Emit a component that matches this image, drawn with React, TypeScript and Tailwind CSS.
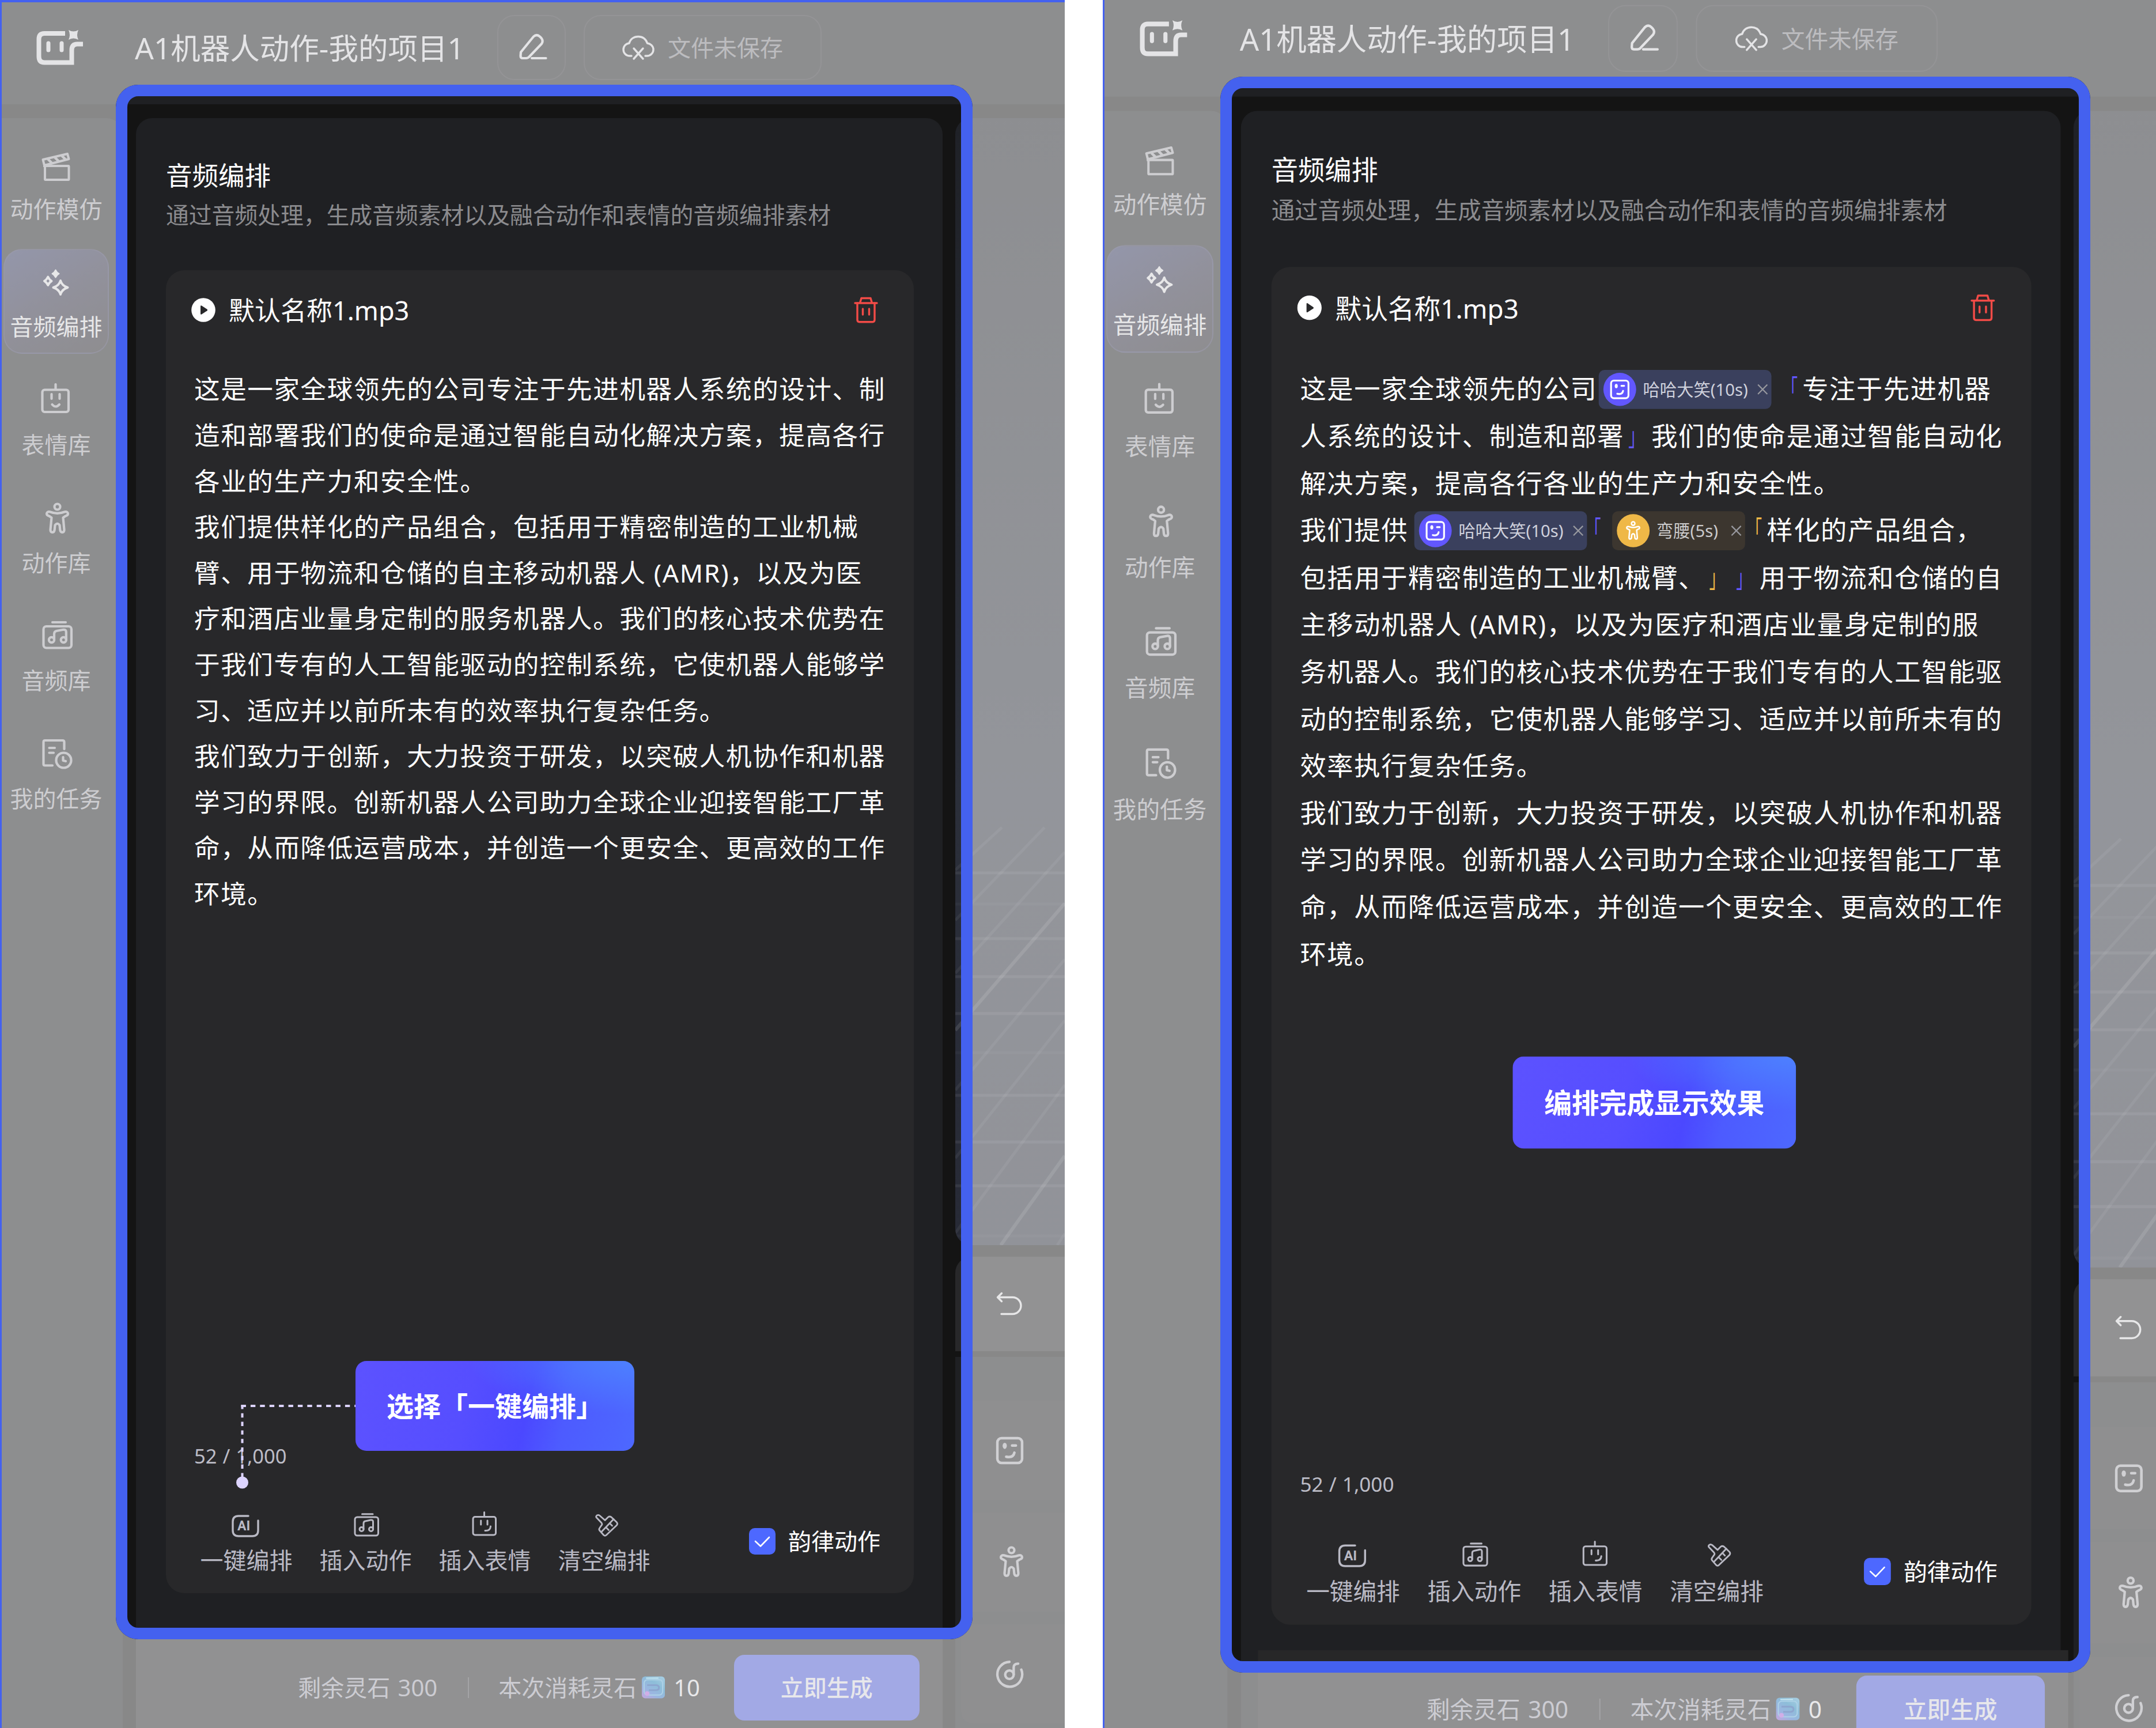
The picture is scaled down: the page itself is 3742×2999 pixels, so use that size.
import type { ReactNode } from "react";
import clsx from "clsx";

type IconProps = { className?: string };

const FONT = "font-['Noto_Sans','Noto_Sans_CJK_SC',sans-serif]";

/* ---------- icons ---------- */

function Logo({ className }: IconProps) {
  return (
    <svg viewBox="0 0 84 64" className={className} fill="none" stroke="currentColor" strokeWidth="8">
      <path d="M51 7H15Q5.500 7 5.500 17V47Q5.500 57.500 15 57.500H62.500V36Q62.500 25.500 72 25.500H82" />
      <path d="M22 24V36M45 24V36" strokeWidth="7" strokeLinecap="round" />
      <path d="M57 1Q65.500 6 74 1Q70 9.500 74 18Q65.500 13 57 18Q61 9.500 57 1Z" fill="currentColor" stroke="none" />
    </svg>
  );
}

function PencilIcon({ className }: IconProps) {
  return (
    <svg viewBox="0 0 60 60" className={className} fill="none" stroke="currentColor" strokeWidth="4.200" strokeLinecap="round" strokeLinejoin="round">
      <path d="M11 37.500L33 10.500Q38.500 5.500 44 10.500L46.500 13Q50.500 18 47 23L26 45Q23.500 48 20 48H14Q10.500 48 10.500 44Z" />
      <path d="M30 48H54.500" />
    </svg>
  );
}

function CloudOffIcon({ className }: IconProps) {
  return (
    <svg viewBox="0 0 56 44" className={className} fill="none" stroke="currentColor" strokeWidth="3.400" strokeLinecap="round">
      <path d="M16 36H13C6.500 36 2 31 2 25C2 19 6.500 14.500 12 14C14 7 20 2.500 27.700 2.500C35.500 2.500 41 7 43.500 14C49 14.500 54 19 54 25C54 31 49 36 43 36H40" />
      <path d="M20 23L36 41M36 23L20 41" />
    </svg>
  );
}

function ClapperIcon({ className }: IconProps) {
  return (
    <svg viewBox="0 0 64 64" className={className} fill="none" stroke="currentColor" strokeWidth="4" strokeLinejoin="round">
      <rect x="12" y="34" width="41.500" height="24" rx="1" />
      <path d="M8.500 23L51 13L53.500 22L11 33Z" />
      <path d="M17 22L24 29M29 19L36 26M41 16L48 23" strokeWidth="4.500" />
      <path d="M11 30V36" />
    </svg>
  );
}

function SparklesIcon({ className }: IconProps) {
  return (
    <svg viewBox="0 0 64 64" className={className} fill="none" stroke="currentColor" strokeWidth="4" strokeLinejoin="round">
      <path d="M30.500 10.500Q32.500 15 36.500 17Q32.500 19 30.500 23.500Q28.500 19 24.500 17Q28.500 15 30.500 10.500Z" fill="currentColor" strokeWidth="2" />
      <path d="M17.300 22.500Q19.500 27.500 23.500 29.700Q19.500 32 17.300 37Q15 32 11 29.700Q15 27.500 17.300 22.500Z" />
      <path d="M39 29Q41.500 38 51.500 41Q41.500 44 39 53Q36.500 44 26.500 41Q36.500 38 39 29Z" />
    </svg>
  );
}

function RobotIcon({ className }: IconProps) {
  return (
    <svg viewBox="0 0 64 64" className={className} fill="none" stroke="currentColor" strokeWidth="4.200" strokeLinecap="round">
      <rect x="7.500" y="13.500" width="45.500" height="38.500" rx="4" />
      <path d="M30.500 4V13M23.500 21V29M37.500 21V29" />
      <path d="M24.500 39Q30.500 46 37 39" />
    </svg>
  );
}

function PersonIcon({ className }: IconProps) {
  return (
    <svg viewBox="0 0 64 64" className={className} fill="none" stroke="currentColor" strokeWidth="4.200" strokeLinejoin="round">
      <circle cx="33.500" cy="11.500" r="5" />
      <path d="M20.500 20.300Q33.500 25.500 46.500 20.300Q51.500 19.500 52 23.500Q52 26.500 47 28L43.500 30.500L45.500 51.500Q45.500 55.800 42 55.800Q38.800 55.800 38.300 51.500L37.500 43.500Q33.500 38 29.500 43.500L28.700 51.500Q28.200 55.800 25 55.800Q21.500 55.800 21.500 51.500L23.500 30.500L20 28Q15 26.500 15 23.500Q15.500 19.500 20.500 20.300Z" />
    </svg>
  );
}

function MusicBoxIcon({ className }: IconProps) {
  return (
    <svg viewBox="0 0 64 64" className={className} fill="none" stroke="currentColor" strokeWidth="4.200" strokeLinecap="round" strokeLinejoin="round">
      <rect x="9.500" y="15" width="48.500" height="37.500" rx="5" />
      <path d="M25 8H48" />
      <circle cx="23.500" cy="38.500" r="4.600" />
      <circle cx="44.300" cy="38.500" r="4.600" />
      <path d="M28 38V28Q28 24 32 23L44 20.800Q48.800 20.300 48.800 25V38" />
    </svg>
  );
}

function TaskIcon({ className }: IconProps) {
  return (
    <svg viewBox="0 0 64 64" className={className} fill="none" stroke="currentColor" strokeWidth="4.200" strokeLinecap="round" strokeLinejoin="round">
      <path d="M25 51.500H12Q9.500 51.500 9.500 49V11Q9.500 8 12 8H42.500Q45.500 8 45.500 11V23" />
      <path d="M19.500 21H29M19.500 29.500H27" />
      <circle cx="44.500" cy="42.500" r="13" />
      <path d="M43.500 37V43L48 44" />
    </svg>
  );
}

function AiIcon({ className }: IconProps) {
  return (
    <svg viewBox="0 0 60 60" className={className} fill="none" stroke="currentColor" strokeWidth="3.400" strokeLinecap="round">
      <path d="M33 14H16Q6 14 6 24V39Q6 49 16 49H40Q50 49 50 39V22" />
      <text x="14" y="39" fontSize="23" fontWeight="700" fill="currentColor" stroke="none" fontFamily="Roboto">
        AI
      </text>
    </svg>
  );
}

function InsertMotionIcon({ className }: IconProps) {
  return (
    <svg viewBox="0 0 60 60" className={className} fill="none" stroke="currentColor" strokeWidth="3" strokeLinecap="round" strokeLinejoin="round">
      <rect x="11" y="16" width="40.500" height="32" rx="4" />
      <path d="M23.500 10.800H42" />
      <circle cx="22.500" cy="37" r="3.500" />
      <circle cx="39" cy="37" r="3.500" />
      <path d="M26 37V27Q26 23.500 29 23L38.500 21Q42.500 20.500 42.500 24V37" />
    </svg>
  );
}

function InsertFaceIcon({ className }: IconProps) {
  return (
    <svg viewBox="0 0 60 60" className={className} fill="none" stroke="currentColor" strokeWidth="3" strokeLinecap="round">
      <rect x="9" y="15.500" width="39.500" height="31.500" rx="3.500" />
      <path d="M28.500 7.500V15M22.700 22V29M34 22V29M30 39.500Q39 40 39.500 32" />
    </svg>
  );
}

function BrushIcon({ className }: IconProps) {
  return (
    <svg viewBox="0 0 60 60" className={className} fill="none" stroke="currentColor" strokeWidth="2.800" strokeLinecap="round" strokeLinejoin="round">
      <path d="M17 13Q19.500 11.500 22 13.500L31 21.500L36.500 16Q39 14 42 16L51.500 25Q53.500 27.500 51.500 30L33 47.500Q31 49 29 47.500L21.500 39Q20 37 22 34.500L25.500 29.500Q26.500 28 25 26L16 16.500Q15 14.500 17 13Z" />
      <path d="M46 19.500L24.500 42M33 34L37.500 38.500M40 27.500L43.500 31" />
    </svg>
  );
}

function PlayIcon({ className }: IconProps) {
  return (
    <svg viewBox="0 0 42 42" className={className}>
      <circle cx="21" cy="21" r="20.800" fill="#fff" />
      <path d="M16 14.500V27.500Q16 29.500 18 28.500L27.500 22.200Q29 21 27.500 19.800L18 13.500Q16 12.500 16 14.500Z" fill="#28282a" />
    </svg>
  );
}

function TrashIcon({ className }: IconProps) {
  return (
    <svg viewBox="0 0 42 46" className={className} fill="none" stroke="currentColor" strokeWidth="3.400" strokeLinecap="round" strokeLinejoin="round">
      <path d="M2 11H40M10.500 11L13 2.500H29L31.500 11" />
      <path d="M6 11V40Q6 43.700 9.500 43.700H32.500Q36 43.700 36 40V11" />
      <path d="M15.500 21V31M26.500 21V31" />
    </svg>
  );
}

function UndoIcon({ className }: IconProps) {
  return (
    <svg viewBox="0 0 48 44" className={className} fill="none" stroke="currentColor" strokeWidth="3.400" strokeLinecap="round" strokeLinejoin="round">
      <path d="M10.500 3.500L3.500 10.500L10.500 17.500M4 10.500H29.500A14.500 14.500 0 0 1 29.500 39.500H10" />
    </svg>
  );
}

function WinkIcon({ className }: IconProps) {
  return (
    <svg viewBox="0 0 48 48" className={className} fill="none" stroke="currentColor" strokeWidth="4.400" strokeLinecap="round">
      <rect x="3" y="3" width="42" height="42" rx="7" />
      <ellipse cx="15.500" cy="16" rx="3.600" ry="5.200" fill="currentColor" stroke="none" />
      <path d="M28 15.500H34.500M18 34.500Q30 37 32 27.500" />
    </svg>
  );
}

function DiscIcon({ className }: IconProps) {
  return (
    <svg viewBox="0 0 50 50" className={className} fill="none" stroke="currentColor" strokeWidth="4.400" strokeLinecap="round">
      <path d="M24.500 3.300A22 22 0 1 0 45.500 17" />
      <circle cx="24.500" cy="26" r="7.500" />
      <path d="M32 26V13Q32 6.500 40 6.500" />
    </svg>
  );
}

function Gem({ className }: IconProps) {
  return (
    <svg viewBox="0 0 42 40" className={className} fill="none">
      <defs>
        <linearGradient id="gem" x1="0" y1="1" x2="0.800" y2="0">
          <stop offset="0" stopColor="#8f4fc0" />
          <stop offset="0.350" stopColor="#3a6fc4" />
          <stop offset="0.700" stopColor="#1f7fb4" />
          <stop offset="1" stopColor="#4a9ac4" />
        </linearGradient>
      </defs>
      <rect x="0.500" y="0.500" width="41" height="39" rx="6" fill="url(#gem)" />
      <rect x="4.500" y="6.500" width="33" height="27" rx="6" stroke="#5fa6d0" strokeWidth="2" />
      <path d="M10 16H25Q31 16 31 20.500Q31 25 25 25H13" stroke="#1f4fa0" strokeWidth="3" />
      <path d="M8 3.500H30" stroke="#8fcfe6" strokeWidth="2" />
      <circle cx="10" cy="31" r="4" fill="#a45fd0" />
    </svg>
  );
}

/* ---------- header and sidebar ---------- */

function Header() {
  return (
    <header className="flex h-[181px] items-start bg-[#1f2023] pt-[26px] text-[#cacacd]">
      <div className="flex h-[113px] items-center">
        <Logo className="ml-[62px] h-[64px] w-[84px]" />
        <h1 className="ml-[88px] w-[629px] text-[51.500px] leading-[60px] whitespace-nowrap">A1机器人动作-我的项目1</h1>
      </div>
      <div className="flex h-[113px] w-[119px] items-center justify-center rounded-[30px] border-2 border-[#2d2d31]">
        <PencilIcon className="size-[60px]" />
      </div>
      <div className="ml-[31px] flex h-[113px] w-[413px] items-center justify-center gap-[23px] rounded-[30px] border-2 border-[#2d2d31]">
        <CloudOffIcon className="h-[44px] w-[56px]" />
        <span className="text-[40px] leading-[50px] text-[#7c7c81]">文件未保存</span>
      </div>
    </header>
  );
}

const navItems = [
  { label: "动作模仿", icon: ClapperIcon },
  { label: "音频编排", icon: SparklesIcon, active: true },
  { label: "表情库", icon: RobotIcon },
  { label: "动作库", icon: PersonIcon },
  { label: "音频库", icon: MusicBoxIcon },
  { label: "我的任务", icon: TaskIcon },
];

function Sidebar() {
  return (
    <nav className="flex w-[213px] shrink-0 flex-col gap-[22.700px] rounded-tr-[28px] bg-[#1f2023] pt-[23px] pl-[6px]">
      {navItems.map(({ label, icon: Icon, active }) => (
        <div
          key={label}
          className={clsx(
            "flex h-[182px] w-[183px] flex-col items-center rounded-[32px] border-2 pt-[24px]",
            active
              ? "border-[#3a3b58]/60 bg-linear-150 from-[#2c3158] via-[#27263a] to-[#211f24] text-[#cfcfd2]"
              : "border-transparent text-[#9d9da2]",
          )}
        >
          <Icon className="size-[64px] shrink-0" />
          <span className="mt-[20px] text-[40px] leading-[50px] whitespace-nowrap">{label}</span>
        </div>
      ))}
    </nav>
  );
}

/* ---------- script text ---------- */

function Line({ children }: { children: ReactNode }) {
  return <div className="flex h-[79.600px] items-center whitespace-pre">{children}</div>;
}

function Tag({ kind, label }: { kind: "face" | "motion"; label: string }) {
  const face = kind === "face";
  return (
    <span
      className={clsx(
        "flex h-[66px] shrink-0 items-center rounded-[10px] pl-[8px] text-[28.800px] leading-[40px] tracking-normal",
        face ? "w-[295px] bg-[#3a405d] text-[#cfd1dc]" : "w-[227px] bg-[#3c362f] text-[#cbcacb]",
      )}
    >
      <span
        className={clsx(
          "flex size-[56px] items-center justify-center rounded-full text-white",
          face ? "bg-[#6257ff]" : "bg-[#efb847]",
        )}
      >
        {face ? <WinkIcon className="size-[34px]" /> : <PersonIcon className="mr-[2px] size-[38px]" />}
      </span>
      <span className="ml-[12px]">{label}</span>
      <svg viewBox="0 0 18 18" className="mr-[6px] ml-auto size-[18px]" stroke="#98999f" strokeWidth="2.200">
        <path d="M1 1L17 17M17 1L1 17" />
      </svg>
    </span>
  );
}

// Corner brackets mark the stretch of text a tag applies to; they are narrower than the glyph's own arm.
function Open({ className }: { className: string }) {
  return <span className={clsx("origin-[28px_50%] scale-x-60", className)}>「</span>;
}

function Close({ className }: { className: string }) {
  return <span className={clsx("origin-[17px_50%] scale-x-60", className)}>」</span>;
}

const rawLines = [
  "这是一家全球领先的公司专注于先进机器人系统的设计、制",
  "造和部署我们的使命是通过智能自动化解决方案，提高各行",
  "各业的生产力和安全性。",
  "我们提供样化的产品组合，包括用于精密制造的工业机械",
  "臂、用于物流和仓储的自主移动机器人 (AMR)，以及为医",
  "疗和酒店业量身定制的服务机器人。我们的核心技术优势在",
  "于我们专有的人工智能驱动的控制系统，它使机器人能够学",
  "习、适应并以前所未有的效率执行复杂任务。",
  "我们致力于创新，大力投资于研发，以突破人机协作和机器",
  "学习的界限。创新机器人公司助力全球企业迎接智能工厂革",
  "命，从而降低运营成本，并创造一个更安全、更高效的工作",
  "环境。",
];

function RawScript() {
  return (
    <>
      {rawLines.map((text) => (
        <Line key={text}>{text}</Line>
      ))}
    </>
  );
}

const arrangedRest = [
  "主移动机器人 (AMR)，以及为医疗和酒店业量身定制的服",
  "务机器人。我们的核心技术优势在于我们专有的人工智能驱",
  "动的控制系统，它使机器人能够学习、适应并以前所未有的",
  "效率执行复杂任务。",
  ...rawLines.slice(8),
];

function ArrangedScript() {
  return (
    <>
      <Line>
        <span>这是一家全球领先的公司</span>
        <span className="ml-[2px] flex">
          <Tag kind="face" label="哈哈大笑(10s)" />
        </span>
        <Open className="ml-[7px] text-[#6257ff]" />
        <span>专注于先进机器</span>
      </Line>
      <Line>
        <span>人系统的设计、制造和部署</span>
        <Close className="text-[#6257ff]" />
        <span>我们的使命是通过智能自动化</span>
      </Line>
      <Line>解决方案，提高各行各业的生产力和安全性。</Line>
      <Line>
        <span>我们提供</span>
        <span className="ml-[10px] flex">
          <Tag kind="face" label="哈哈大笑(10s)" />
        </span>
        <Open className="-ml-[14px] text-[#6257ff]" />
        <span className="ml-[11px] flex">
          <Tag kind="motion" label="弯腰(5s)" />
        </span>
        <Open className="-ml-[9px] text-[#efb847]" />
        <span>样化的产品组合，</span>
      </Line>
      <Line>
        <span>包括用于精密制造的工业机械臂、</span>
        <Close className="text-[#efb847]" />
        <Close className="text-[#6257ff]" />
        <span>用于物流和仓储的自</span>
      </Line>
      {arrangedRest.map((text) => (
        <Line key={text}>{text}</Line>
      ))}
    </>
  );
}

/* ---------- main panel ---------- */

const tools = [
  { label: "一键编排", icon: AiIcon },
  { label: "插入动作", icon: InsertMotionIcon },
  { label: "插入表情", icon: InsertFaceIcon },
  { label: "清空编排", icon: BrushIcon },
];

function Toolbar() {
  return (
    <div className="flex items-center pr-[58px] pl-[10.500px]">
      <div className="flex gap-[47px]">
        {tools.map(({ label, icon: Icon }) => (
          <div key={label} className="flex w-[160px] flex-col items-center text-[#b9b9c4]">
            <Icon className="size-[60px]" />
            <span className="mt-[6px] text-[40px] leading-[50px] whitespace-nowrap">{label}</span>
          </div>
        ))}
      </div>
      <div className="ml-auto flex items-center text-white">
        <span className="flex size-[46px] items-center justify-center rounded-[10px] bg-[#4d68ff]">
          <svg viewBox="0 0 28 20" className="mt-[2px] h-[20px] w-[28px]" fill="none" stroke="#fff" strokeWidth="2.600" strokeLinecap="round" strokeLinejoin="round">
            <path d="M2 9L11 17.500L26 2" />
          </svg>
        </span>
        <span className="ml-[22px] text-[40px] leading-[50px]">韵律动作</span>
      </div>
    </div>
  );
}

function EditorCard({ arranged }: { arranged: boolean }) {
  return (
    <section className="mt-[68px] ml-[52px] flex h-[2296px] w-[1298px] shrink-0 flex-col rounded-[32px] bg-[#28282a] pt-[39px] pb-[32px] pl-[49px]">
      <div className="flex h-[60px] items-center pr-[62px] text-white">
        <PlayIcon className="-ml-[5px] size-[42px]" />
        <span className="mt-[2px] ml-[23px] text-[45px] leading-[60px]">默认名称1.mp3</span>
        <TrashIcon className="ml-auto h-[46px] w-[42px] text-[#f24b47]" />
      </div>
      <div className="mt-[68.500px] text-[44.500px] tracking-[1.650px] text-white">
        {arranged ? <ArrangedScript /> : <RawScript />}
      </div>
      <p className="mt-auto mb-[65px] text-[34.500px] leading-[50px] text-[#bcbcc6] [word-spacing:1px]">52 / 1,000</p>
      <Toolbar />
    </section>
  );
}

function Footer({ cost, className }: { cost: number; className: string }) {
  return (
    <footer className={clsx("flex h-[240px] shrink-0 items-start justify-end bg-[#272728] pr-[40px]", className)}>
      <div className="flex h-[114px] items-center text-[40px] leading-[50px] whitespace-nowrap text-[#9a9aa6]">
        <span className="[word-spacing:3px]">剩余灵石 300</span>
        <span className="ml-[53px] h-[36px] w-[2px] bg-[#4b4b50]" />
        <span className="ml-[51px]">本次消耗灵石</span>
        <Gem className="ml-[8px] h-[39px] w-[42px]" />
        <span className="mr-[59px] ml-[14px] text-[#d2d2d6]">{cost}</span>
        <span className="flex h-[114px] w-[321.500px] items-center justify-center rounded-[18px] bg-[#4755cc] font-medium text-[#d0d0d8]">
          立即生成
        </span>
      </div>
    </footer>
  );
}

function Panel({ arranged }: { arranged: boolean }) {
  return (
    <main className="ml-[23px] flex w-[1399.500px] shrink-0 flex-col rounded-t-[28px] bg-[#1f2023] pt-[69px]">
      <h2 className="ml-[52px] text-[45.500px] leading-[60px] text-white">音频编排</h2>
      <p className="mt-[11px] ml-[52px] text-[39.800px] leading-[56px] text-[#8b8b8e]">
        通过音频处理，生成音频素材以及融合动作和表情的音频编排素材
      </p>
      <EditorCard arranged={arranged} />
      {arranged ? (
        <Footer cost={0} className="z-10 mt-[43px] -mr-[13px] ml-[29px] pt-[43px]" />
      ) : (
        <Footer cost={10} className="mt-[65px] pt-[42px]" />
      )}
    </main>
  );
}

/* ---------- stage and tracks on the right ---------- */

const gridRows = [1310, 1364, 1424, 1490, 1554, 1622, 1696, 1777, 1853, 1940];

function Stage() {
  return (
    <div className="h-[1956.500px] overflow-hidden rounded-l-[28px] bg-linear-to-b from-[#1f2127] from-0% via-[#2b2f3a] via-60% to-[#272a36]">
      <svg viewBox="0 0 190 1956" className="h-[1956px] w-[190px]" fill="none" stroke="#fff" strokeWidth="5">
        {gridRows.map((y, i) => (
          <path key={y} d={`M0 ${y}H190`} strokeOpacity={i % 4 === 1 ? 0.03 : 0.07} />
        ))}
        <g strokeOpacity="0.060">
          <path d="M0 1305L81 1231M0 1392L155 1231M0 1484L190 1274M0 1687L190 1460M0 1805L190 1566M0 1935L190 1678M177 1956L190 1936" />
        </g>
        <g strokeOpacity="0.110" strokeWidth="6">
          <path d="M0 1583L190 1363M79 1956L190 1801" />
        </g>
      </svg>
    </div>
  );
}

function TrackColumn() {
  const rows = [WinkIcon, PersonIcon, DiscIcon];
  return (
    <aside className="ml-[22.500px] w-[190px] shrink-0">
      <Stage />
      <div className="mt-[20px] flex h-[164px] items-center rounded-tl-[28px] bg-[#28282a] pl-[70px] text-[#cfcfd2]">
        <UndoIcon className="h-[44px] w-[48px]" />
      </div>
      <div className="mt-[10px] flex h-[700px] flex-col gap-[22px] bg-[#1f2023] pt-[76px] pl-[10px] text-[#a2a2a8]">
        {rows.map((Icon, i) => (
          <div key={i} className="flex h-[172px] shrink-0 items-center rounded-l-[20px] bg-[#222225] pl-[60px]">
            {Icon === PersonIcon ? <Icon className="-ml-[6px] size-[64px]" /> : <Icon className="size-[49px]" />}
          </div>
        ))}
      </div>
    </aside>
  );
}

/* ---------- guide overlay ---------- */

function Callout({ children, className }: { children: ReactNode; className: string }) {
  return (
    <div
      className={clsx(
        "absolute flex h-[156px] w-[484px] items-center justify-center rounded-[19px] bg-[radial-gradient(ellipse_at_100%_0%,#4d80ff_0%,#4d80ff00_42%),linear-gradient(103deg,#5c52ff_0%,#564eff_40%,#4b48ff_61%,#4d5bff_74%,#4d68ff_100%)] text-[47px] leading-[60px] font-bold whitespace-nowrap text-white",
        className,
      )}
    >
      {children}
    </div>
  );
}

function Pointer() {
  return (
    <svg viewBox="0 0 210 160" className="absolute top-[2430px] left-[408px] h-[160px] w-[210px]" fill="none" stroke="#ddd4ff" strokeWidth="4">
      <path d="M10.500 10H210" strokeDasharray="8.400 8" />
      <path d="M12.500 8V136" strokeDasharray="7.400 7.400" />
      <circle cx="12.500" cy="143" r="10.500" fill="#ddd4ff" stroke="none" />
    </svg>
  );
}

function Workspace({ arranged }: { arranged: boolean }) {
  return (
    <div className="relative flex h-[3020px] w-[1848px] flex-col bg-[#141414]">
      <Header />
      <div className="mt-[23.500px] flex min-h-0 flex-1">
        <Sidebar />
        <Panel arranged={arranged} />
        <TrackColumn />
      </div>
      {arranged ? (
        <Callout className="top-[1804px] left-[700px]">编排完成显示效果</Callout>
      ) : (
        <>
          <Pointer />
          <Callout className="top-[2362px] left-[617px]">选择「一键编排」</Callout>
        </>
      )}
    </div>
  );
}

// Blue outline around the panel; the huge spread shadow fades everything outside it.
const spotlight = "absolute rounded-[39px] border-[20px] border-[#4461ef] shadow-[0_0_0_4000px_rgba(255,255,255,0.495)]";

export default function App() {
  return (
    <div className={clsx("flex h-[2999px] w-[3742px] gap-[66px] overflow-hidden bg-white", FONT)}>
      <div className="relative h-[2999px] w-[1848px] shrink-0 overflow-hidden">
        <Workspace arranged={false} />
        <div className={clsx(spotlight, "top-[147px] left-[201px] h-[2698px] w-[1487px]")} />
        <div className="absolute inset-0 border-t-4 border-l-3 border-[#4461ef]" />
      </div>
      <div className="relative h-[2999px] w-[1828px] shrink-0 overflow-hidden">
        <div className="mt-[-17.700px] origin-top-left scale-x-[1.0162] scale-y-[1.0263]">
          <Workspace arranged />
        </div>
        <div className={clsx(spotlight, "top-[133px] left-[203.500px] h-[2770px] w-[1510px]")} />
        <div className="absolute inset-0 border-l-3 border-[#4461ef]" />
      </div>
    </div>
  );
}
